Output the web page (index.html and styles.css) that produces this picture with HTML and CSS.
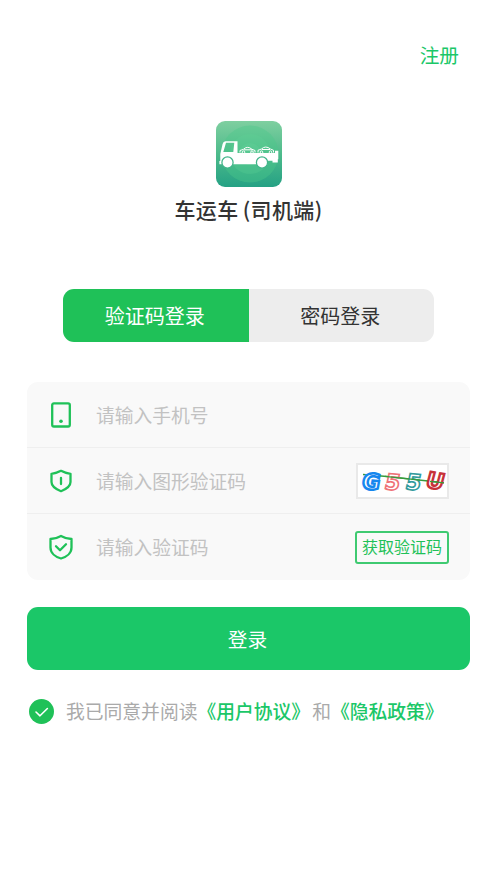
FILE: index.html
```html
<!DOCTYPE html>
<html lang="zh-CN">
<head>
  <meta charset="UTF-8" />
  <meta name="viewport" content="width=device-width, initial-scale=1.0" />
  <title>车运车(司机端)</title>
  <link rel="stylesheet" href="styles.css">
</head>
<body>
<header class="topbar">
  <a class="register">注册</a>
</header>

<main>
  <!-- Logo + app name -->
  <div class="brand">
    <svg class="logo" viewBox="0 0 66 66">
      <defs>
        <linearGradient id="logoBg" x1="0" y1="0" x2="0" y2="1">
          <stop offset="0" stop-color="#7fcfa0" />
          <stop offset="0.5" stop-color="#4dbb8b" />
          <stop offset="1" stop-color="#25a184" />
        </linearGradient>
      </defs>
      <rect width="66" height="66" rx="9" fill="url(#logoBg)" />
      <circle cx="34" cy="33" r="28.5" fill="#4cc98a" opacity="0.4" />
      <circle cx="34" cy="33" r="20" fill="#5fd298" opacity="0.25" />
      <circle cx="34" cy="33" r="11" fill="#6cd8a0" opacity="0.2" />
      <!-- cab and flatbed -->
      <path fill="#fff" fill-rule="evenodd" d="M9.5 20.3H21.5V32H59V29.8H62.3V38.2H61.8V41.5H56.5V39.7H52V43.3H3.4V40H4.3V33L6.6 23Q7.2 20.3 9.5 20.3ZM10 21.8L7.3 31H17.3L18.3 21.8Z" />
      <g fill="#fff" stroke="#42b58a" stroke-width="1.3">
        <circle cx="11.5" cy="41.5" r="5.6" />
        <circle cx="46" cy="41.5" r="5.6" />
      </g>
      <!-- the two cars on the bed -->
      <g fill="none" stroke="#fff" stroke-width="1">
        <path d="M24 31.5V29.5Q26 28.8 27.5 28.3Q31.5 24.4 36 28.3L39 29.5V31.5M28 28.8H36" />
        <path d="M42 31.5V29.3Q44 28.5 45.5 28Q49.5 24.1 54.5 28L57.5 29.3V31.5M46 28.5H54" />
        <circle cx="27.5" cy="31.2" r="1.3" />
        <circle cx="36" cy="31.2" r="1.3" />
        <circle cx="45.5" cy="31.2" r="1.3" />
        <circle cx="54.5" cy="31.2" r="1.3" />
      </g>
    </svg>
    <h1>车运车<span class="suffix">(司机端)</span></h1>
  </div>

  <div class="tabs">
    <button class="tab active">验证码登录</button>
    <button class="tab">密码登录</button>
  </div>

  <form class="card">
    <div class="row">
      <svg class="icon" viewBox="0 0 26 26">
        <rect x="4.2" y="1.3" width="17.6" height="23.2" rx="1.7" />
        <circle class="dot" cx="13" cy="19.2" r="1.8" />
      </svg>
      <input type="tel" placeholder="请输入手机号">
    </div>
    <div class="row">
      <svg class="icon" viewBox="0 0 26 26">
        <path d="M13 2.8Q17.3 5.2 22.5 5.8V14Q22.5 19.5 13 23.2Q3.5 19.5 3.5 14V5.8Q8.7 5.2 13 2.8Z" />
        <path d="M13 10V16" />
      </svg>
      <input type="text" placeholder="请输入图形验证码">
      <!-- captcha -->
      <svg class="captcha" viewBox="0 0 89 32">
        <path d="M5 9.6L29 11.5L86 17.8" fill="none" stroke="#379b3d" stroke-width="1.5" />
        <g class="captcha-text">
          <text x="4" y="24.5" stroke="#1687ee" stroke-width="2.4" transform="rotate(4 14 17) skewX(-6)" dx="2">G</text>
          <text x="28" y="25" stroke="#ef7378" transform="rotate(6 35 17) skewX(-6)" dx="1">5</text>
          <text x="49" y="25" stroke="#329b9d" transform="rotate(6 56 17) skewX(-6)" dx="1">5</text>
          <text x="69" y="24" stroke="#c8323a" stroke-width="2.4" transform="rotate(9 79 17) skewX(-6)" dx="1">U</text>
        </g>
        <path d="M27 11.3L62 15.2M72 16.3L86 17.8" fill="none" stroke="#379b3d" stroke-width="1.3" />
      </svg>
    </div>
    <div class="row">
      <svg class="icon" viewBox="0 0 26 26">
        <path d="M13 1.9Q18 4.8 23.5 5V13.5C23.5 19 18.6 23 13 24.5C7.4 23 2.5 19 2.5 13.5V5Q8 4.8 13 1.9Z" />
        <path d="M8 12.2L12 16.2L18 10.2" />
      </svg>
      <input type="text" placeholder="请输入验证码">
      <button type="button" class="send-code">获取验证码</button>
    </div>
  </form>

  <button class="submit">登录</button>

  <div class="agreement">
    <svg class="check" viewBox="0 0 25 25">
      <circle cx="12.5" cy="12.5" r="12.5" />
      <path d="M7 13L11 16.8L18.4 9.5" />
    </svg>
    <p>我已同意并阅读<a>《用户协议》</a><span class="and">和</span><a>《隐私政策》</a></p>
  </div>
</main>
</body>
</html>
```

FILE: styles.css
```css
:root {
  --green: #1fc158;
  --primary: #1bc768;
  --card: #f9f9f9;
  --line: #efefef;
  --text: #333333;
  --hint: #c2c2c2;
  --font: "Noto Sans CJK SC", sans-serif;
}

* {
  box-sizing: border-box;
}

body {
  font-family: var(--font);
  background: #ffffff;
  color: var(--text);
  margin: 0;
  padding: 0 27px;
}

button,
input {
  font-family: inherit;
  border: none;
  padding: 0;
  margin: 0;
}

.topbar {
  display: flex;
  justify-content: flex-end;
  padding: 40px 11px 0 0;
  height: 121px;
}

.register {
  font-size: 19.7px;
  line-height: 30px;
  color: var(--primary);
}

.brand {
  display: flex;
  flex-direction: column;
  align-items: center;
}

.logo {
  width: 66px;
  height: 66px;
}

.brand h1 {
  margin: 6px 0 0;
  font-size: 21px;
  font-weight: 500;
  line-height: 32px;
  letter-spacing: 0.4px;
}

.suffix {
  margin-left: 4px;
}

.tabs {
  display: flex;
  height: 53px;
  margin: 64px 36px 0;
  border-radius: 11px;
  overflow: hidden;
}

.tab {
  flex: 1;
  padding-right: 2px;
  font-size: 20px;
  color: var(--text);
  background: #ededed;
}

.tab.active {
  color: #ffffff;
  background: var(--green);
}

.card {
  margin-top: 40px;
  background: var(--card);
  border-radius: 11px;
}

.row {
  display: flex;
  align-items: center;
  height: 66px;
  padding: 0 21px;
}

.row:not(:last-child) {
  border-bottom: 1px solid var(--line);
}

.icon {
  flex: none;
  width: 26px;
  height: 26px;
  fill: none;
  stroke: var(--green);
  stroke-width: 2.3;
  stroke-linecap: round;
  stroke-linejoin: round;
}

.icon .dot {
  fill: var(--green);
  stroke: none;
}

.row input {
  flex: 1;
  min-width: 0;
  margin-left: 22px;
  padding-bottom: 1px;
  font-size: 18.75px;
  background: transparent;
  outline: none;
}

.row input::placeholder {
  color: var(--hint);
}

.captcha {
  flex: none;
  width: 93px;
  height: 36px;
  background: #ffffff;
  border: 2px solid #e9e9e9;
}

.captcha-text {
  font-family: "DejaVu Sans", sans-serif;
  font-size: 22px;
  font-weight: bold;
  fill: #ffffff;
  stroke-width: 1.6;
}

.send-code {
  flex: none;
  width: 94px;
  height: 33px;
  padding-bottom: 2px;
  font-size: 16px;
  color: var(--green);
  background: transparent;
  border: 2px solid #3fca71;
  border-radius: 3px;
}

.submit {
  display: block;
  width: 100%;
  height: 63px;
  margin-top: 27px;
  padding: 0 2px 1px 0;
  font-size: 19.7px;
  color: #ffffff;
  background: var(--primary);
  border-radius: 11px;
}

.agreement {
  display: flex;
  align-items: center;
  margin-top: 27px;
  padding-left: 2px;
}

.check {
  flex: none;
  width: 25px;
  height: 25px;
  fill: var(--green);
}

.check path {
  fill: none;
  stroke: #ffffff;
  stroke-width: 1.6;
  stroke-linecap: round;
  stroke-linejoin: round;
}

.agreement p {
  margin: 0 0 0 12px;
  font-size: 18.8px;
  line-height: 28px;
  color: #aaaaaa;
  white-space: nowrap;
}

.agreement a {
  font-weight: 500;
  color: var(--primary);
}

.and {
  margin-left: 2px;
}
```
